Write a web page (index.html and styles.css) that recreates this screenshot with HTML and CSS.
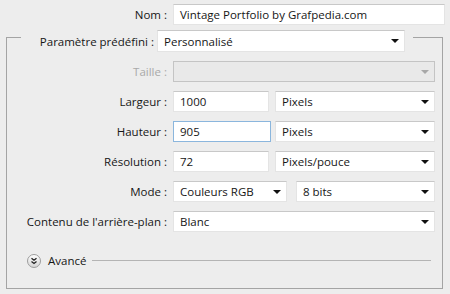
FILE: index.html
```html
<!DOCTYPE html>
<html lang="fr">
<head>
<meta charset="utf-8">
<link rel="stylesheet" href="styles.css">
</head>
<body>
<div class="dialog">
  <div class="name-row">
    <span class="label">Nom :</span>
    <div class="field name-field">Vintage Portfolio by Grafpedia.com</div>
  </div>
  <div class="frame">
    <div class="preset">
      <span class="preset-label">Paramètre prédéfini :</span>
      <div class="field select preset-select">Personnalisé<span class="arrow"></span></div>
    </div>
    <div class="row">
      <span class="label disabled">Taille :</span>
      <div class="field select disabled-field"><span class="arrow grey"></span></div>
    </div>
    <div class="row">
      <span class="label">Largeur :</span>
      <div class="pair">
        <div class="field num">1000</div>
        <div class="field select unit">Pixels<span class="arrow"></span></div>
      </div>
    </div>
    <div class="row">
      <span class="label">Hauteur :</span>
      <div class="pair">
        <div class="field num focus">905</div>
        <div class="field select unit">Pixels<span class="arrow"></span></div>
      </div>
    </div>
    <div class="row">
      <span class="label">Résolution :</span>
      <div class="pair">
        <div class="field num">72</div>
        <div class="field select unit">Pixels/pouce<span class="arrow"></span></div>
      </div>
    </div>
    <div class="row">
      <span class="label">Mode :</span>
      <div class="pair mode">
        <div class="field select mode-sel">Couleurs RGB<span class="arrow"></span></div>
        <div class="field select bits">8 bits<span class="arrow"></span></div>
      </div>
    </div>
    <div class="row">
      <span class="label">Contenu de l'arrière-plan :</span>
      <div class="field select">Blanc<span class="arrow"></span></div>
    </div>
    <div class="advanced">
      <span class="adv-btn">
        <svg width="14" height="14" viewBox="0 0 14 14">
          <defs>
            <linearGradient id="g" x1="0" y1="0" x2="0" y2="1">
              <stop offset="0" stop-color="#ffffff"/>
              <stop offset="1" stop-color="#d4d4d4"/>
            </linearGradient>
          </defs>
          <circle cx="7" cy="7" r="6.5" fill="url(#g)" stroke="#9c9c9c"/>
          <path d="M4.5 4.2 L7 6.2 L9.5 4.2 M4.5 7.4 L7 9.4 L9.5 7.4" fill="none" stroke="#222" stroke-width="1.3"/>
        </svg>
      </span>
      <span class="adv-label">Avancé</span>
      <span class="adv-line"></span>
    </div>
  </div>
</div>
</body>
</html>
```

FILE: styles.css
```css
html, body {
  margin: 0;
  padding: 0;
}
body {
  background: #ededed;
  font-family: "Open Sans", "Liberation Sans", sans-serif;
  font-size: 11.5px;
  color: #161616;
  width: 450px;
  height: 294px;
  overflow: hidden;
}
.dialog {
  padding-top: 4px;
}
.name-row {
  display: flex;
  align-items: center;
  column-gap: 6px;
}
.label {
  width: 167px;
  text-align: right;
  white-space: nowrap;
}
.field {
  box-sizing: border-box;
  height: 21px;
  background: #ffffff;
  border: 1px solid #e4e4e4;
  border-top-color: #c8c8c8;
  display: flex;
  align-items: center;
  padding-left: 6px;
  white-space: nowrap;
}
.name-field {
  width: 272px;
}
.frame {
  box-sizing: border-box;
  margin: 12px 7px 0 6px;
  height: 252px;
  border: 1px solid #a4a4a4;
}
.preset {
  box-sizing: border-box;
  display: flex;
  align-items: center;
  width: 392px;
  margin: -8px 0 0 14px;
  padding: 0 8px 0 16px;
  background: #ededed;
}
.preset-label {
  flex: 1;
  text-align: right;
  padding-right: 3px;
  white-space: nowrap;
}
.preset-select {
  width: 248px;
  height: 22px;
}
.row {
  display: grid;
  grid-template-columns: 160px 262px;
  column-gap: 6px;
  align-items: center;
  margin-top: 9px;
}
.row .label {
  width: auto;
}
.label.disabled {
  color: #a9a9a9;
}
.disabled-field {
  background: #e9e9e9;
  border-color: #c4c4c4;
}
.select .arrow {
  margin-left: auto;
  margin-right: 5px;
  width: 0;
  height: 0;
  border-left: 4px solid transparent;
  border-right: 4px solid transparent;
  border-top: 4px solid #111;
}
.select .arrow.grey {
  border-top-color: #a8a8a8;
}
.pair {
  display: flex;
  justify-content: space-between;
}
.num {
  width: 96px;
}
.num.focus {
  width: 98px;
  border-color: #8bb6dd;
}
.unit {
  width: 160px;
}
.mode-sel {
  width: 114px;
}
.bits {
  width: 139px;
}
.advanced {
  display: flex;
  align-items: center;
  margin: 21px 0 0 20px;
}
.adv-btn {
  display: flex;
  width: 14px;
  height: 14px;
}
.adv-label {
  margin-left: 7px;
}
.adv-line {
  flex: 1;
  height: 1px;
  background: #b4b4b4;
  margin: 0 11px 0 6px;
}
```
